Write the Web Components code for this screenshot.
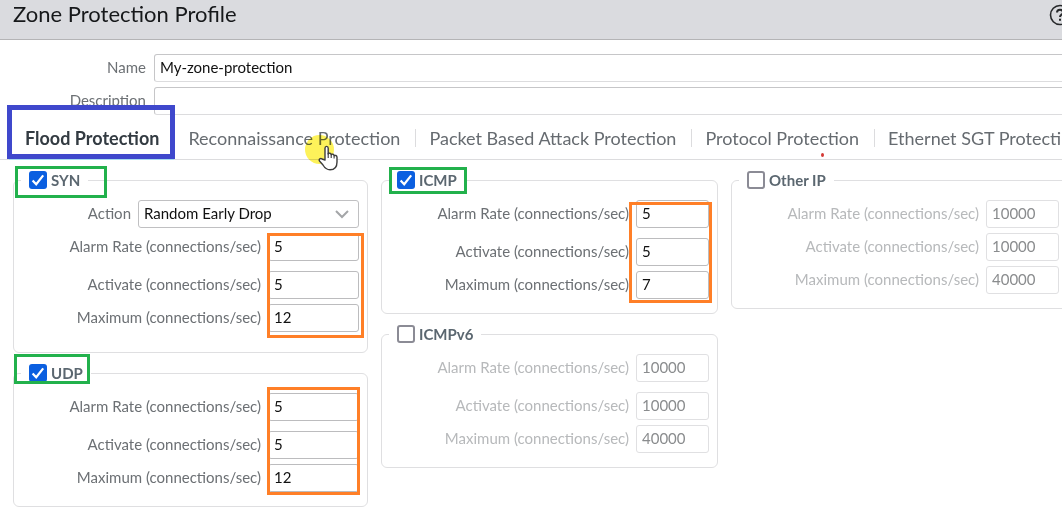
<!DOCTYPE html>
<html lang="en">
<head>
<meta charset="utf-8">
<title>Zone Protection Profile</title>
<style>
  body { margin: 0; background: #fff; font-family: Lato, "Open Sans", sans-serif; font-size: 15px; color: #6c7074; overflow: hidden; }
</style>
</head>
<body>
<zone-dialog></zone-dialog>

<template id="t-dialog">
  <style>
    :host { display: block; }
    header { display: flex; align-items: flex-start; justify-content: space-between; box-sizing: border-box; height: 40px; background: #dadbdf; border-bottom: 1px solid #b4b4b6; padding-left: 13px; overflow: hidden; }
    h1 { margin: 0; font-size: 22px; line-height: 28px; font-weight: 400; color: #16181a; }
    header button { border: 0; padding: 0; background: none; width: 22px; height: 22px; margin: 4px -9px 0 0; flex: none; }
    header svg { display: block; }
    .top { display: grid; gap: 5px; padding: 14px 0 0; }
    .grid { display: grid; grid-template-columns: 355fr 337fr 337fr; column-gap: 13px; align-items: start; padding: 10px 0 10px 13px; margin-right: -6px; }
    .col { display: grid; gap: 10px; }
  </style>
  <header>
    <h1>Zone Protection Profile</h1>
    <button type="button" aria-label="Help">
      <svg width="22" height="22" viewBox="0 0 22 22" fill="none" stroke="#26282a" stroke-width="2"><circle cx="11" cy="11" r="9.5" stroke-width="1.6"/><path d="M8 8.6C8 6.6 9.200 5.800 11 5.800s3 1 3 2.600c0 2.200-3 2.200-3 4.600M11 14.800v2"/></svg>
    </button>
  </header>
  <div class="top">
    <text-field label="Name" value="My-zone-protection"></text-field>
    <text-field label="Description" value=""></text-field>
  </div>
  <tab-strip></tab-strip>
  <div class="grid">
    <div class="col">
      <flood-panel name="SYN" on style="--tail: 20px; --field: 91px">
        <action-field></action-field>
        <rate-field label="Alarm Rate" value="5"></rate-field>
        <rate-field label="Activate" value="5" spaced></rate-field>
        <rate-field label="Maximum" value="12"></rate-field>
        <mark-box slot="mark" style="left: 2px; top: -4px; width: 92px; height: 32px"></mark-box>
        <mark-box slot="mark" style="--ink: #ff7f27; right: 4px; top: 63px; width: 97px; height: 105px"></mark-box>
      </flood-panel>
      <flood-panel name="UDP" on style="--field: 91px">
        <rate-field label="Alarm Rate" value="5"></rate-field>
        <rate-field label="Activate" value="5" spaced></rate-field>
        <rate-field label="Maximum" value="12"></rate-field>
        <mark-box slot="mark" style="left: 1px; top: -9px; width: 76px; height: 30px"></mark-box>
        <mark-box slot="mark" style="--ink: #ff7f27; right: 8px; top: 24px; width: 93px; height: 108px"></mark-box>
      </flood-panel>
    </div>
    <div class="col">
      <flood-panel name="ICMP" on>
        <rate-field label="Alarm Rate" value="5"></rate-field>
        <rate-field label="Activate" value="5" spaced></rate-field>
        <rate-field label="Maximum" value="7"></rate-field>
        <mark-box slot="mark" style="left: 8px; top: -3px; width: 78px; height: 27px"></mark-box>
        <mark-box slot="mark" style="--ink: #ff7f27; right: 6px; top: 32px; width: 83px; height: 101px"></mark-box>
      </flood-panel>
      <flood-panel name="ICMPv6">
        <rate-field label="Alarm Rate" value="10000" disabled></rate-field>
        <rate-field label="Activate" value="10000" disabled spaced></rate-field>
        <rate-field label="Maximum" value="40000" disabled></rate-field>
      </flood-panel>
    </div>
    <div class="col">
      <flood-panel name="Other IP">
        <rate-field label="Alarm Rate" value="10000" disabled></rate-field>
        <rate-field label="Activate" value="10000" disabled></rate-field>
        <rate-field label="Maximum" value="40000" disabled></rate-field>
      </flood-panel>
    </div>
  </div>
</template>

<template id="t-text">
  <style>
    :host { display: flex; align-items: center; gap: 8px; }
    label { width: 146px; flex: none; text-align: right; line-height: 20px; padding-bottom: 2px; }
    input { flex: 1; min-width: 0; box-sizing: border-box; height: 28px; margin-right: -6px; padding: 0 5px 3px; border: 1px solid #c6c6c8; border-bottom-color: #dcdcde; border-radius: 3px; font: inherit; color: #111; background: #fff; }
  </style>
  <label for="f"></label><input id="f" type="text">
</template>

<template id="t-rate">
  <style>
    :host { display: flex; align-items: center; justify-content: flex-end; gap: 7px; }
    :host([spaced]) { margin-top: 5px; }
    label { line-height: 20px; padding-bottom: 2px; white-space: nowrap; }
    input { width: var(--field, 73px); box-sizing: border-box; height: 28px; padding: 0 5px 3px; border: 1px solid #bcbcbe; border-radius: 3px; font: inherit; color: #111; background: #fff; }
    :host([disabled]) label { color: #b7b9bb; }
    :host([disabled]) input { border-color: #e0e0e2; color: #8a8c8e; }
  </style>
  <label for="f"></label><input id="f" type="text" inputmode="numeric">
</template>

<template id="t-action">
  <style>
    :host { display: flex; align-items: center; justify-content: flex-end; gap: 7px; }
    label { line-height: 20px; padding-bottom: 2px; }
    .box { position: relative; width: 221px; }
    select { appearance: none; display: block; width: 100%; box-sizing: border-box; height: 28px; padding: 0 30px 3px 5px; border: 1px solid #c0c0c2; border-radius: 3px; background: #fff; font: inherit; color: #111; }
    svg { position: absolute; right: 10px; top: 10px; pointer-events: none; }
  </style>
  <label for="f">Action</label>
  <div class="box">
    <select id="f"><option>Random Early Drop</option><option>SYN Cookies</option></select>
    <svg width="14" height="9" viewBox="0 0 14 9" fill="none" stroke="#a4a6a8" stroke-width="2"><path d="M1 1l6 6 6-6"/></svg>
  </div>
</template>

<template id="t-panel">
  <style>
    :host { display: block; position: relative; }
    fieldset { margin: 0; min-width: 0; border: 1px solid #dfdfe1; border-radius: 6px; padding: 10px 8px var(--tail, 14px) 7px; }
    legend { padding: 0 8px; height: 20px; }
    legend div { display: flex; align-items: center; gap: 4px; height: 20px; }
    label { font-weight: 700; color: #5b6770; line-height: 20px; }
    input { appearance: none; box-sizing: border-box; width: 18px; height: 18px; margin: 0; border: 2px solid #8b8b95; border-radius: 3px; background: #fff; flex: none; }
    input:checked { border: 0; background: #0b5fe0; }
    .check { position: relative; height: 18px; display: block; }
    .check input { display: block; }
    svg { position: absolute; left: 0; top: 0; pointer-events: none; display: none; }
    input:checked + svg { display: block; }
    .rows { display: grid; gap: 5px; }
  </style>
  <fieldset>
    <legend><div><span class="check"><input id="c" type="checkbox"><svg width="18" height="18" viewBox="0 0 18 18" fill="none" stroke="#fff" stroke-width="2.200"><path d="M3.600 9.400l3.600 3.800 7-8.800"/></svg></span><label for="c"></label></div></legend>
    <div class="rows"><slot></slot></div>
  </fieldset>
  <slot name="mark"></slot>
</template>

<template id="t-mark">
  <style>:host { display: block; position: absolute; box-sizing: border-box; border: 3px solid var(--ink, #22b14c); pointer-events: none; }</style>
</template>

<template id="t-tabs">
  <style>
    :host { display: block; position: relative; height: 44px; border-bottom: 1px solid #dcdcde; }
    nav { display: flex; align-items: center; height: 46px; padding-left: 11px; }
    button { flex: none; border: 0; background: none; padding: 0 15px 0 14px; font: inherit; font-size: 18px; line-height: 24px; color: #666b70; white-space: nowrap; }
    i { flex: none; width: 1px; height: 18px; margin: 0 -1px 0 0; background: #dcdcde; }
    [aria-selected=true] { font-weight: 700; color: #333b42; }
    mark-box { --ink: #3f48cc; border-width: 5px; left: 7px; top: -10px; width: 168px; height: 54px; }
    .bar { position: absolute; left: 9px; bottom: -1px; width: 165px; height: 2px; background: #a8dcf0; }
    .halo { position: absolute; left: 305px; top: 20px; width: 29px; height: 29px; border-radius: 50%; background: #fdf25a; mix-blend-mode: multiply; }
    .hand { position: absolute; left: 318px; top: 30px; }
    .dot { position: absolute; left: 821px; top: 38px; width: 3px; height: 4px; border-radius: 50%; background: #d43a35; }
  </style>
  <nav role="tablist">
    <button role="tab" aria-selected="true">Flood Protection</button><i></i>
    <button role="tab">Reconnaissance Protection</button><i></i>
    <button role="tab">Packet Based Attack Protection</button><i></i>
    <button role="tab">Protocol Protection</button><i></i>
    <button role="tab">Ethernet SGT Protection</button>
  </nav>
  <span class="bar"></span>
  <mark-box></mark-box>
  <span class="halo"></span>
  <svg class="hand" width="22" height="26" viewBox="0 0 22 26" fill="#fff" stroke="#3c3c3c" stroke-width="1.400" stroke-linejoin="round"><path d="M7 15V3.200c0-2.400 3.200-2.400 3.200 0V9c.6-1.400 3-1 3 .8.8-1.200 2.900-.7 2.900 1 .9-.9 2.900-.4 2.900 1.400V17c0 5-2.400 7.800-7 7.800-4 0-5.600-2.400-7-4.800L1.500 16c-1-1.800 1-3.200 2.500-2z"/><path d="M10.200 8v5M13.200 9.500V13M16.100 10.800V13.500" stroke-width="1.100"/></svg>
  <span class="dot"></span>
</template>

<script>
  const paint = (el, id) => {
    const root = el.attachShadow({ mode: 'open' });
    root.append(document.getElementById(id).content.cloneNode(true));
    return root;
  };
  const define = (name, id, setup) => customElements.define(name, class extends HTMLElement {
    connectedCallback() {
      if (this.shadowRoot) return;
      const root = paint(this, id);
      if (setup) setup(this, root);
    }
  });
  define('mark-box', 't-mark');
  define('text-field', 't-text', (el, root) => {
    root.querySelector('label').textContent = el.getAttribute('label');
    root.querySelector('input').value = el.getAttribute('value');
  });
  define('rate-field', 't-rate', (el, root) => {
    const input = root.querySelector('input');
    root.querySelector('label').textContent = el.getAttribute('label') + ' (connections/sec)';
    input.value = el.getAttribute('value');
    input.disabled = el.hasAttribute('disabled');
  });
  define('action-field', 't-action');
  define('flood-panel', 't-panel', (el, root) => {
    root.querySelector('label').textContent = el.getAttribute('name');
    root.querySelector('input').checked = el.hasAttribute('on');
  });
  define('tab-strip', 't-tabs');
  define('zone-dialog', 't-dialog');
</script>
</body>
</html>
